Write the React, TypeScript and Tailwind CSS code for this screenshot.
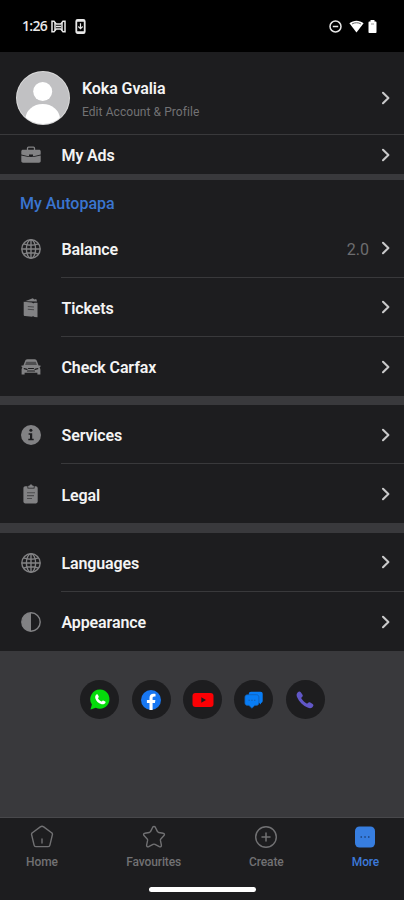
import type { ReactNode } from 'react'

type RowProps = {
  icon: ReactNode
  label: string
  value?: string
  divider?: boolean
  className?: string
}

function Chevron() {
  return (
    <svg width="10" height="14" viewBox="0 0 10 14" fill="none" stroke="#c9c9ca" strokeWidth="2.1" strokeLinecap="round" strokeLinejoin="round">
      <path d="M2 1.8 7.4 7 2 12.2" />
    </svg>
  )
}

function Row({ icon, label, value, divider, className = 'h-[59px]' }: RowProps) {
  return (
    <button type="button" className={`flex w-full items-stretch pl-5 text-left ${className}`}>
      <span className="flex w-[41px] shrink-0 items-center text-[#828284]">{icon}</span>
      <span className={`flex flex-1 items-center pr-[13px] ${divider ? 'border-b border-[#39393b]' : ''}`}>
        <span className="flex-1 pl-[0.5px] pt-[3px] text-[16px] font-semibold leading-5 tracking-[-0.12px] text-[#f4f4f4]">{label}</span>
        {value && <span className="mr-[12px] pt-[3px] text-[16px] leading-5 text-[#6d6d6f]">{value}</span>}
        <Chevron />
      </span>
    </button>
  )
}

function BriefcaseIcon() {
  return (
    <svg width="22" height="20" viewBox="0 0 22 20" fill="none">
      <path d="M7.5 5V3.2c0-.6.4-1 1-1h5c.6 0 1 .4 1 1V5" stroke="currentColor" strokeWidth="1.3" />
      <path d="M3 4.7h16c1 0 1.7.7 1.7 1.7v3.2l-7 1.7h-5.4l-7-1.7V6.4c0-1 .7-1.7 1.7-1.7Z" fill="currentColor" />
      <path d="M1.3 10.4 8.500 12h5l7.200-1.600V16c0 1-.7 1.700-1.700 1.700H3c-1 0-1.700-.7-1.700-1.700Z" fill="currentColor" />
      <path d="M9 9.500h4v1.400l-2 1-2-1Z" fill="#1d1d1f" />
    </svg>
  )
}

function GlobeIcon() {
  return (
    <svg width="22" height="22" viewBox="0 0 22 22" fill="none" stroke="currentColor" strokeWidth="1.4">
      <circle cx="11" cy="11" r="9.2" />
      <ellipse cx="11" cy="11" rx="4.6" ry="9.2" />
      <path d="M11 1.8v18.4M1.8 11h18.4M3.500 5.900c4.500 1.700 10.500 1.700 15 0M3.500 16.100c4.500-1.700 10.500-1.700 15 0" />
    </svg>
  )
}

function TicketsIcon() {
  return (
    <svg width="22" height="22" viewBox="0 0 22 22" fill="none">
      <path d="m5 4.3 7.800-3 1.600 1.100 1.800-.3.900 2.300" fill="currentColor" />
      <path d="M3.700 4.800 12 5.600c.5 1 1.800 1 2.400.1l3.100.1v14.400l-3-.2c-.7-.8-1.800-.8-2.400-.2l-7.100-.7c-.8 0-1.300-.6-1.300-1.300Z" fill="currentColor" />
      <path d="m7.800 9.500 6.200.5M7.800 12.300l6.200.5" stroke="#49494b" strokeWidth="1.1" />
    </svg>
  )
}

function CarIcon() {
  return (
    <svg width="22" height="20" viewBox="0 0 22 20" fill="none">
      <path d="M5 4.200c.4-1.300 1-2 2.300-2h7.400c1.300 0 1.900.7 2.300 2l1.600 4.300h1.900v1.300l-1 .7c.7.700.9 1.500.9 2.500v4.500h-3v-1.800H4.600v1.800h-3V13c0-1 .2-1.800.9-2.500l-1-.7V8.500h1.900Z" fill="currentColor" />
      <path d="M6.300 4.800h9.400L16.900 8H5.100Z" fill="#4e4e50" />
      <path d="M4.200 11.700 7 12.300M17.800 11.700l-2.800.6M8.500 11.500h5M7.500 14h7" stroke="#1d1d1f" strokeWidth="1.2" strokeLinecap="round" />
    </svg>
  )
}

function InfoIcon() {
  return (
    <svg width="22" height="22" viewBox="0 0 22 22">
      <circle cx="11" cy="11" r="10" fill="currentColor" />
      <circle cx="10.900" cy="6.300" r="1.500" fill="#1d1d1f" />
      <path d="M8.600 9.200h3.600v5.600h1.500v1.500H8.300v-1.500H10v-4.100H8.600Z" fill="#1d1d1f" />
    </svg>
  )
}

function ClipboardIcon() {
  return (
    <svg width="22" height="22" viewBox="0 0 22 22" fill="none">
      <path d="M5.300 3.300h2.200v2.300h7V3.300h1.300c1.100 0 1.900.8 1.900 1.900v13.400c0 1.100-.8 1.900-1.900 1.900H5.300c-1.100 0-1.900-.8-1.900-1.900V5.200c0-1.100.8-1.900 1.900-1.900Z" fill="currentColor" />
      <path d="M8.500 4.500V3h1.200c.1-1.800 2.500-1.800 2.600 0h1.200v1.500Z" fill="currentColor" stroke="currentColor" strokeWidth=".6" />
      <path d="M7 9.700h8M7 12.600h7M7 15.500h5" stroke="#4c4c4e" strokeWidth="1.1" />
    </svg>
  )
}

function ContrastIcon() {
  return (
    <svg width="22" height="22" viewBox="0 0 22 22" fill="none">
      <circle cx="11" cy="11" r="9.200" stroke="currentColor" strokeWidth="1.400" />
      <path d="M11 1.800a9.200 9.200 0 0 0 0 18.400Z" fill="currentColor" />
    </svg>
  )
}

function StatusBar() {
  return (
    <div className="flex h-[52px] items-center bg-black pl-[22px] pr-[26px] text-[#e8e8e8]">
      <span className="w-[29px] whitespace-nowrap font-['Open_Sans',sans-serif] text-[14px] font-semibold leading-5 tracking-[-0.7px]">1:26</span>
      <svg width="15" height="13" viewBox="0 0 15 13" fill="none" stroke="currentColor" strokeWidth="1.5">
        <path d="M1 1.200h2L5.200 4h4.600L12 1.200h2v10.600h-2L9.800 9H5.200L3 11.800H1Z" />
        <path d="M4 3v7M11 3v7M5 6.500h5" />
      </svg>
      <svg className="ml-[9px]" width="11" height="15" viewBox="0 0 11 15" fill="none" stroke="currentColor">
        <rect x="1.300" y="1" width="8.400" height="13" rx="1.300" strokeWidth="1.800" />
        <path d="M1 2h9M1 13h9" strokeWidth="1.500" />
        <path d="M5.500 4.300v5M3.300 7.500l2.200 2.100 2.200-2.100" strokeWidth="1.200" />
      </svg>
      <svg className="ml-auto" width="13" height="13" viewBox="0 0 13 13" fill="none" stroke="currentColor" strokeWidth="1.500">
        <circle cx="6.500" cy="6.500" r="5.500" />
        <path d="M3.800 6.500h5.400" />
      </svg>
      <svg className="ml-[7px]" width="15" height="13" viewBox="0 0 15 13">
        <path d="M.4 3.200C4.500-.2 10.500-.2 14.600 3.200L7.500 12.600Z" fill="white" />
        <path d="M3 4c2.700-1.700 6.300-1.700 9 0" fill="none" stroke="#555" strokeWidth=".9" />
      </svg>
      <svg className="ml-[4px] mr-px" width="9" height="13" viewBox="0 0 9 13">
        <path d="M2.500 1.500V0h4v1.500h1.200c.5 0 .8.400.8.900v9.800c0 .5-.3.800-.8.800H1.300c-.5 0-.8-.3-.8-.8V2.400c0-.5.300-.9.800-.9Z" fill="white" />
        <path d="M3 4h3" stroke="#999" />
      </svg>
    </div>
  )
}

function Profile() {
  return (
    <button type="button" className="flex h-[83px] w-full items-center border-b border-[#39393b] pl-4 pr-[13px] pt-[10px] text-left">
      <svg className="shrink-0" width="54" height="54" viewBox="0 0 54 54">
        <clipPath id="avatar"><circle cx="27" cy="27" r="26" /></clipPath>
        <circle cx="27" cy="27" r="27" fill="#dadada" />
        <circle cx="27" cy="27" r="26" fill="#c1c1c3" />
        <circle cx="26.700" cy="20.500" r="9.500" fill="white" />
        <ellipse cx="26.700" cy="48" rx="17.300" ry="15" fill="white" clipPath="url(#avatar)" />
      </svg>
      <span className="ml-3 flex flex-1 flex-col pt-[2px]">
        <span className="text-[16px] font-semibold leading-6 tracking-[-0.08px] text-[#f4f4f4]">Koka Gvalia</span>
        <span className="pt-px text-[12px] leading-5 tracking-[0.07px] text-[#727274]">Edit Account &amp; Profile</span>
      </span>
      <Chevron />
    </button>
  )
}

const socials: { name: string; icon: ReactNode }[] = [
  {
    name: 'WhatsApp',
    icon: (
      <svg width="20" height="21" viewBox="0 0 20 21">
        <path d="M10.300.5a9.600 9.600 0 1 1-4.500 18.300L.5 20.500l1.400-5.100A9.600 9.600 0 0 1 10.300.5Z" fill="#05dc0b" />
        <path d="M6.400 5.600c.7-.5 1.300-.4 1.600.3l.8 1.900c.1.500-.5 1-.8 1.400.9 1.700 2.100 2.700 3.700 3.400.5-.5.900-1.300 1.500-1.100l2 1c.6.300.4 1.100.1 1.600-.8 1.200-2.300 1.500-3.700 1.100-3.300-1-5.500-3.300-6.300-6-.3-1.400.1-2.800 1.100-3.600Z" fill="white" />
      </svg>
    ),
  },
  {
    name: 'Facebook',
    icon: (
      <svg width="20" height="20" viewBox="0 0 20 20">
        <circle cx="10" cy="10" r="10" fill="#1877f2" />
        <path d="M8.500 20v-7.100H5.900V10h2.600V7.800c0-2.600 1.500-4 3.900-4 .8 0 1.700.1 2.100.2v2.500h-1.300c-1.200 0-1.600.8-1.600 1.600V10h2.800l-.5 2.900h-2.300V20Z" fill="white" />
      </svg>
    ),
  },
  {
    name: 'YouTube',
    icon: (
      <svg width="22" height="14" viewBox="0 0 22 14">
        <rect x=".5" width="21" height="14" rx="3" fill="#fb0004" />
        <path d="m9.300 4.200 4.700 2.800-4.700 2.800Z" fill="#1d1d1f" />
      </svg>
    ),
  },
  {
    name: 'Chat',
    icon: (
      <svg width="20" height="18" viewBox="0 0 20 18">
        <path d="M7 .8h9.500c1.300 0 2.200.9 2.200 2.200v6.800c0 1.200-.7 2-1.700 2.200v1.500l-3-2.500H7c-1.300 0-2.200-.9-2.200-2.200V3C4.800 1.700 5.700.8 7 .8Z" fill="#087df5" />
        <path d="M3.300 3.700h9.200c1.400 0 2.400 1 2.400 2.400v5.900c0 1.400-1 2.400-2.400 2.400h-1.700L7.900 17.300 5 14.400H3.300c-1.400 0-2.400-1-2.400-2.400V6.100c0-1.400 1-2.400 2.400-2.400Z" fill="#087df5" stroke="#155aa6" strokeWidth=".7" />
        <path d="M4.500 9.300h7" stroke="#175baa" strokeWidth="1.100" strokeDasharray="1.300 1.500" />
      </svg>
    ),
  },
  {
    name: 'Phone',
    icon: (
      <svg width="18" height="18" viewBox="0 0 18 18">
        <path d="M1.600 1.600C2.700.4 3.900.2 4.800 1.300l1.700 2.400c.6 1 .3 1.700-.5 2.300-.7.600-.9.900-.4 1.700 1.200 1.900 2.700 3.300 4.600 4.500.8.500 1.200.3 1.700-.3.700-.8 1.400-1 2.400-.5l2.400 1.600c1.100.8.900 2-.3 3.200-1.100 1.100-2.700 1.200-4.300.6C7.100 14.700 3.100 10.700 1 5.900.3 4.300.5 2.800 1.600 1.600Z" fill="#6157c7" />
      </svg>
    ),
  },
]

function BottomNav() {
  return (
    <nav className="flex h-[83px] flex-col items-center border-t border-[#48484b] bg-[#1d1d1f]">
      <div className="flex w-full justify-between pl-[25px] pr-6 pt-[7px] text-[12px] font-medium leading-4 tracking-[-0.1px] text-[#717173]">
        <div className="flex w-[34px] flex-col items-center gap-[5px]">
          <svg width="24" height="24" viewBox="0 0 24 24" fill="none" stroke="currentColor" strokeWidth="1.400" strokeLinecap="round" strokeLinejoin="round">
            <path d="M10.300 1.900 2.400 7.700c-.8.500-1 1.100-.8 2l2.500 10.500c.2.900.8 1.400 1.700 1.400h12.400c.9 0 1.500-.5 1.700-1.400l2.500-10.500c.2-.9 0-1.500-.8-2l-7.900-5.800c-1.200-.8-2.200-.8-3.400 0ZM12 14v4" />
          </svg>
          <span>Home</span>
        </div>
        <div className="flex w-[56px] flex-col items-center gap-[5px]">
          <svg width="24" height="24" viewBox="0 0 24 24" fill="none" stroke="currentColor" strokeWidth="1.400" strokeLinejoin="round">
            <path d="M10.700 2.200c.6-1 2-1 2.600 0l2.200 4.400c.2.500.7.800 1.200.9l4.500.8c1.300.2 1.600 1.400.8 2.300l-3.200 3.300c-.4.400-.5.900-.4 1.500l1 4.700c.2 1.400-.9 2.200-2.100 1.600L13 19.400c-.6-.3-1.400-.3-2 0l-4.300 2.300c-1.200.6-2.300-.2-2.100-1.600l1-4.700c.1-.6 0-1.100-.4-1.500L2 10.600c-.8-.9-.5-2.100.8-2.300l4.500-.8c.5-.1 1-.4 1.200-.9Z" />
          </svg>
          <span className="whitespace-nowrap">Favourites</span>
        </div>
        <div className="flex w-[36px] flex-col items-center gap-[5px]">
          <svg width="24" height="24" viewBox="0 0 24 24" fill="none" stroke="currentColor" strokeWidth="1.400" strokeLinecap="round">
            <circle cx="12" cy="12" r="10.300" />
            <path d="M12 8v8M8 12h8" strokeWidth="1.500" />
          </svg>
          <span>Create</span>
        </div>
        <div className="flex w-[29px] flex-col items-center gap-[5px] text-[#3c79d9]">
          <svg width="24" height="24" viewBox="0 0 24 24">
            <rect x="2" y="1.500" width="20" height="21" rx="4.500" fill="#377ee0" />
            <path d="M7.500 12h1.500M11.300 12h1.500M15 12h1.500" stroke="#1e4278" strokeWidth="1.500" />
          </svg>
          <span>More</span>
        </div>
      </div>
      <div className="ml-px mt-[17px] h-[5px] w-[107px] rounded-full bg-white" />
    </nav>
  )
}

export default function App() {
  return (
    <div className="flex h-[900px] w-[404px] flex-col overflow-hidden bg-[#39393c] font-[Roboto,sans-serif]">
      <StatusBar />
      <section className="h-[122px] bg-[#1d1d1f]">
        <Profile />
        <Row className="h-[39px]" icon={<BriefcaseIcon />} label="My Ads" />
      </section>
      <section className="mt-[6px] h-[216px] bg-[#1d1d1f]">
        <h2 className="flex h-[39px] items-center pl-5 pt-2 text-[16px] font-medium leading-5 text-[#3a75d0]">My Autopapa</h2>
        <Row icon={<GlobeIcon />} label="Balance" value="2.0" divider />
        <Row icon={<TicketsIcon />} label="Tickets" divider />
        <Row icon={<CarIcon />} label="Check Carfax" />
      </section>
      <section className="mt-[9px] h-[118px] bg-[#1d1d1f]">
        <Row className="h-[59px] [&>span]:pt-px" icon={<InfoIcon />} label="Services" divider />
        <Row className="h-[59px] [&>span]:pt-px" icon={<ClipboardIcon />} label="Legal" />
      </section>
      <section className="mt-[10px] h-[118px] bg-[#1d1d1f]">
        <Row icon={<GlobeIcon />} label="Languages" divider />
        <Row icon={<ContrastIcon />} label="Appearance" />
      </section>
      <div className="flex flex-1 items-start justify-center gap-[12.4px] pl-px pt-[29px]">
        {socials.map((s) => (
          <button key={s.name} type="button" className="flex size-[39px] items-center justify-center rounded-full bg-[#1d1d1f]">
            {s.icon}
          </button>
        ))}
      </div>
      <BottomNav />
    </div>
  )
}
